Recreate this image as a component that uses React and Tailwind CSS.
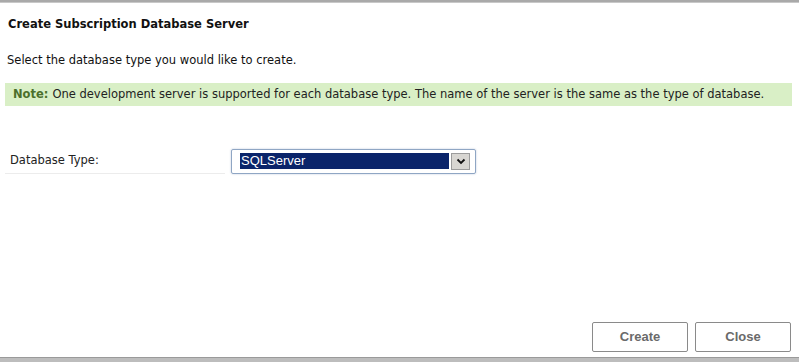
import React from "react";

export default function App() {
  return (
    <div className="w-[799px] h-[362px] bg-white flex flex-col overflow-hidden" style={{ fontFamily: '"DejaVu Sans", Verdana, sans-serif' }}>
      {/* clipped strip of the page above the dialog */}
      <div className="h-[3px] bg-[#a9a9a9] border-b border-[#c8c8c8] shrink-0" />
      <div className="flex-1 flex flex-col px-[5px]">
        <h1 className="mt-[13px] ml-[3px] text-[11.5px] font-bold text-[#111] leading-[16px]">
          Create Subscription Database Server
        </h1>
        <p className="mt-[20px] ml-[2px] text-[11.5px] text-[#111] leading-[16px]">
          Select the database type you would like to create.
        </p>
        <div className="mt-[15px] h-[23px] w-[787px] bg-[#d9efc6] flex items-center pl-[8px] text-[11.5px] text-[#222]">
          <span className="font-bold text-[#4b6f2b] mr-[4px]">Note:</span>
          One development server is supported for each database type. The name of the server is the same as the type of database.
        </div>
        <div className="mt-[42px] flex items-center">
          <div className="w-[220px] h-[26px] flex items-center pl-[5px] text-[11.5px] text-[#222] border-b border-[#ececec]">
            Database Type:
          </div>
          <div className="ml-[6px] w-[245px] h-[25px] border border-[#8fa6c4] rounded-[2px] shadow-[0_0_2px_rgba(80,110,160,0.4)] flex items-center pl-[8px] pr-[5px]">
            <div className="flex-1 h-[16px] bg-[#0a246a] text-white text-[13px] leading-[16px] pl-[1px]" style={{ fontFamily: '"Liberation Sans", Arial, sans-serif' }}>
              SQLServer
            </div>
            <div className="ml-[2px] w-[19px] h-[17px] bg-[#d8d6d2] border border-[#9c9c9c] flex items-center justify-center">
              <svg width="10" height="7" viewBox="0 0 10 7">
                <path d="M1.5 1.5 L5 5 L8.5 1.5" fill="none" stroke="#111" strokeWidth="1.8" />
              </svg>
            </div>
          </div>
        </div>
        <div className="mt-auto mb-[5px] flex justify-end gap-[7px] pr-[3px]">
          <button className="w-[96px] h-[30px] bg-white border border-[#8a8a8a] rounded-[2px] text-[13px] font-bold text-[#6a6a6a]" style={{ fontFamily: '"Liberation Sans", Arial, sans-serif' }}>
            Create
          </button>
          <button className="w-[96px] h-[30px] bg-white border border-[#8a8a8a] rounded-[2px] text-[13px] font-bold text-[#6a6a6a]" style={{ fontFamily: '"Liberation Sans", Arial, sans-serif' }}>
            Close
          </button>
        </div>
      </div>
      <div className="h-[5px] bg-[#bdbdbd] border-t border-[#9a9a9a] shrink-0" />
    </div>
  );
}
